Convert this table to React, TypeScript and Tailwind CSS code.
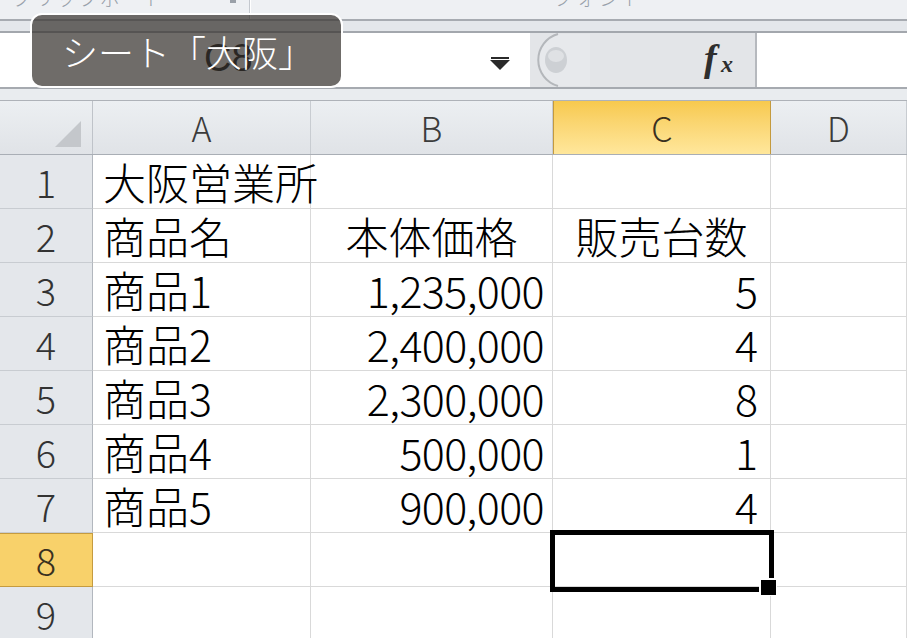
import React from "react";

const cols = [93, 218, 242, 218, 136];

type Cell = { t?: string; align?: "l" | "c" | "r" };
const data: Cell[][] = [
  [{ t: "大阪営業所", align: "l" }, {}, {}, {}],
  [{ t: "商品名", align: "l" }, { t: "本体価格", align: "c" }, { t: "販売台数", align: "c" }, {}],
  [{ t: "商品1", align: "l" }, { t: "1,235,000", align: "r" }, { t: "5", align: "r" }, {}],
  [{ t: "商品2", align: "l" }, { t: "2,400,000", align: "r" }, { t: "4", align: "r" }, {}],
  [{ t: "商品3", align: "l" }, { t: "2,300,000", align: "r" }, { t: "8", align: "r" }, {}],
  [{ t: "商品4", align: "l" }, { t: "500,000", align: "r" }, { t: "1", align: "r" }, {}],
  [{ t: "商品5", align: "l" }, { t: "900,000", align: "r" }, { t: "4", align: "r" }, {}],
  [{}, {}, {}, {}],
  [{}, {}, {}, {}],
];

const jp = { fontFamily: '"Noto Sans CJK JP", "Noto Sans", sans-serif' };

export default function App() {
  return (
    <div
      className="relative w-[907px] h-[638px] overflow-hidden bg-white flex flex-col"
      style={jp}
    >
      {/* ribbon */}
      <div className="h-[19px] bg-[#eef0f3] relative overflow-hidden flex shrink-0">
        <div className="w-[250px] h-full relative overflow-hidden border-r border-[#c4c8ce]">
          <span className="absolute left-[12px] top-[-17px] text-[20px] font-light text-[#98a0aa] tracking-[2px]">
            クリップボード
          </span>
          <span className="absolute left-[230px] top-[0px] w-[6px] h-[3px] bg-[#9aa0a8]" />
        </div>
        <div className="flex-1 h-full relative overflow-hidden border-l border-white">
          <span className="absolute left-[302px] top-[-17px] text-[20px] font-light text-[#98a0aa] tracking-[3px]">
            フォント
          </span>
        </div>
      </div>
      <div className="h-[2px] bg-[#a7abb1] shrink-0" />
      <div className="h-[10px] bg-[#e4e7eb] shrink-0" />
      <div className="h-[2px] bg-[#a3a7ad] shrink-0" />
      {/* formula bar */}
      <div className="h-[54px] flex shrink-0">
        <div className="w-[530px] bg-white relative flex items-center">
          <span className="absolute left-[204px] top-[6px] text-[38px] leading-none text-black" style={{ fontFamily: '"Liberation Sans", sans-serif' }}>
            C8
          </span>
          <svg className="absolute left-[488px] top-[24px]" width="24" height="14" viewBox="0 0 24 14">
            <rect x="3" y="0" width="18" height="2" fill="#2a2a2a" />
            <path d="M2 3 L22 3 L12 13 Z" fill="#2a2a2a" />
          </svg>
        </div>
        <div className="w-[227px] bg-[#e3e5e8] relative border-r-2 border-[#b6b9be]">
          <svg className="absolute left-0 top-0" width="60" height="54" viewBox="0 0 60 54">
            <path d="M28 1 A27 27 0 0 0 28 53 L60 53 L60 1 Z" fill="#e7e9ec" />
            <path d="M28 1 A27 27 0 0 0 28 53" fill="none" stroke="#b4b7bb" strokeWidth="2" />
            <ellipse cx="26" cy="27" rx="11" ry="13" fill="#cdd0d4" />
            <ellipse cx="26" cy="23" rx="8" ry="6" fill="#dfe1e4" />
          </svg>
          <div className="absolute left-[174px] top-[6px] w-[40px] h-[44px] text-[#2e2e2e]" style={{ fontFamily: '"Liberation Serif", serif' }}>
            <span className="absolute left-0 top-0 italic font-bold text-[38px] leading-none">f</span>
            <span className="absolute left-[17px] top-[13px] italic font-bold text-[24px] leading-none">x</span>
          </div>
        </div>
        <div className="flex-1 bg-white" />
      </div>
      <div className="h-[2px] bg-[#a6aab0] shrink-0" />
      <div className="h-[11px] bg-[#e9ecef] shrink-0" />
      <div className="h-[1px] bg-[#aeb2b8] shrink-0" />
      {/* column header */}
      <div className="flex h-[54px] shrink-0 border-b border-[#a9aeb5]">
        <div className="w-[93px] shrink-0 bg-gradient-to-b from-[#eceff2] to-[#e0e3e7] border-r border-[#bfc3c9] relative">
          <svg className="absolute left-[55px] top-[20px]" width="26" height="26" viewBox="0 0 26 26">
            <path d="M26 0 L26 26 L0 26 Z" fill="#c4c7cb" />
          </svg>
        </div>
        {["A", "B", "C", "D"].map((l, i) => (
          <div
            key={l}
            className={
              "shrink-0 flex items-center justify-center text-[34px] font-light leading-none " +
              (l === "C"
                ? "bg-gradient-to-b from-[#f7c94d] to-[#ffe79b] border-x border-[#c49a3e] text-[#3a3020]"
                : "bg-gradient-to-b from-[#eceff2] to-[#e0e3e7] border-r border-[#c8ccd1] text-[#3b3b3b]")
            }
            style={{ width: cols[i + 1] }}
          >
            {l}
          </div>
        ))}
      </div>
      {/* rows */}
      {data.map((row, r) => {
        const sel = r === 7;
        return (
          <div key={r} className="flex h-[54px] shrink-0">
            <div
              className={
                "w-[93px] shrink-0 flex items-center justify-center text-[38px] font-light leading-none border-r " +
                (sel
                  ? "bg-[#f8d16a] border-[#c59b3f] border-y border-y-[#c59b3f] text-[#3a3020]"
                  : "bg-[#e4e7eb] border-[#b2b7be] border-b border-b-[#c8ccd1] text-[#333]")
              }
            >
              {r + 1}
            </div>
            {row.map((c, i) => (
              <div
                key={i}
                className={
                  "shrink-0 flex items-center border-r border-b border-[#d9d9d9] text-[43px] font-light leading-none text-black whitespace-nowrap overflow-visible " +
                  (c.align === "c"
                    ? "justify-center"
                    : c.align === "r"
                    ? i === 2
                      ? "justify-end pr-[12px]"
                      : "justify-end pr-[8px] tracking-[-0.6px]"
                    : "justify-start pl-[10px]")
                }
                style={{ width: cols[i + 1] }}
              >
                {c.t}
              </div>
            ))}
          </div>
        );
      })}
      {/* selection */}
      <div className="absolute left-[550px] top-[530px] w-[224px] h-[62px] border-[5px] border-black" />
      <div className="absolute left-[759px] top-[578px] w-[18px] h-[18px] bg-white" />
      <div className="absolute left-[761px] top-[580px] w-[15px] h-[15px] bg-black" />
      {/* overlay label */}
      <div className="absolute left-[30px] top-[13px] w-[313px] h-[75px] rounded-[12px] border-2 border-white bg-[rgba(58,54,50,0.73)] flex items-center pl-[30px]">
        <span className="text-white text-[36px] font-light leading-none">シート「大阪」</span>
      </div>
    </div>
  );
}
